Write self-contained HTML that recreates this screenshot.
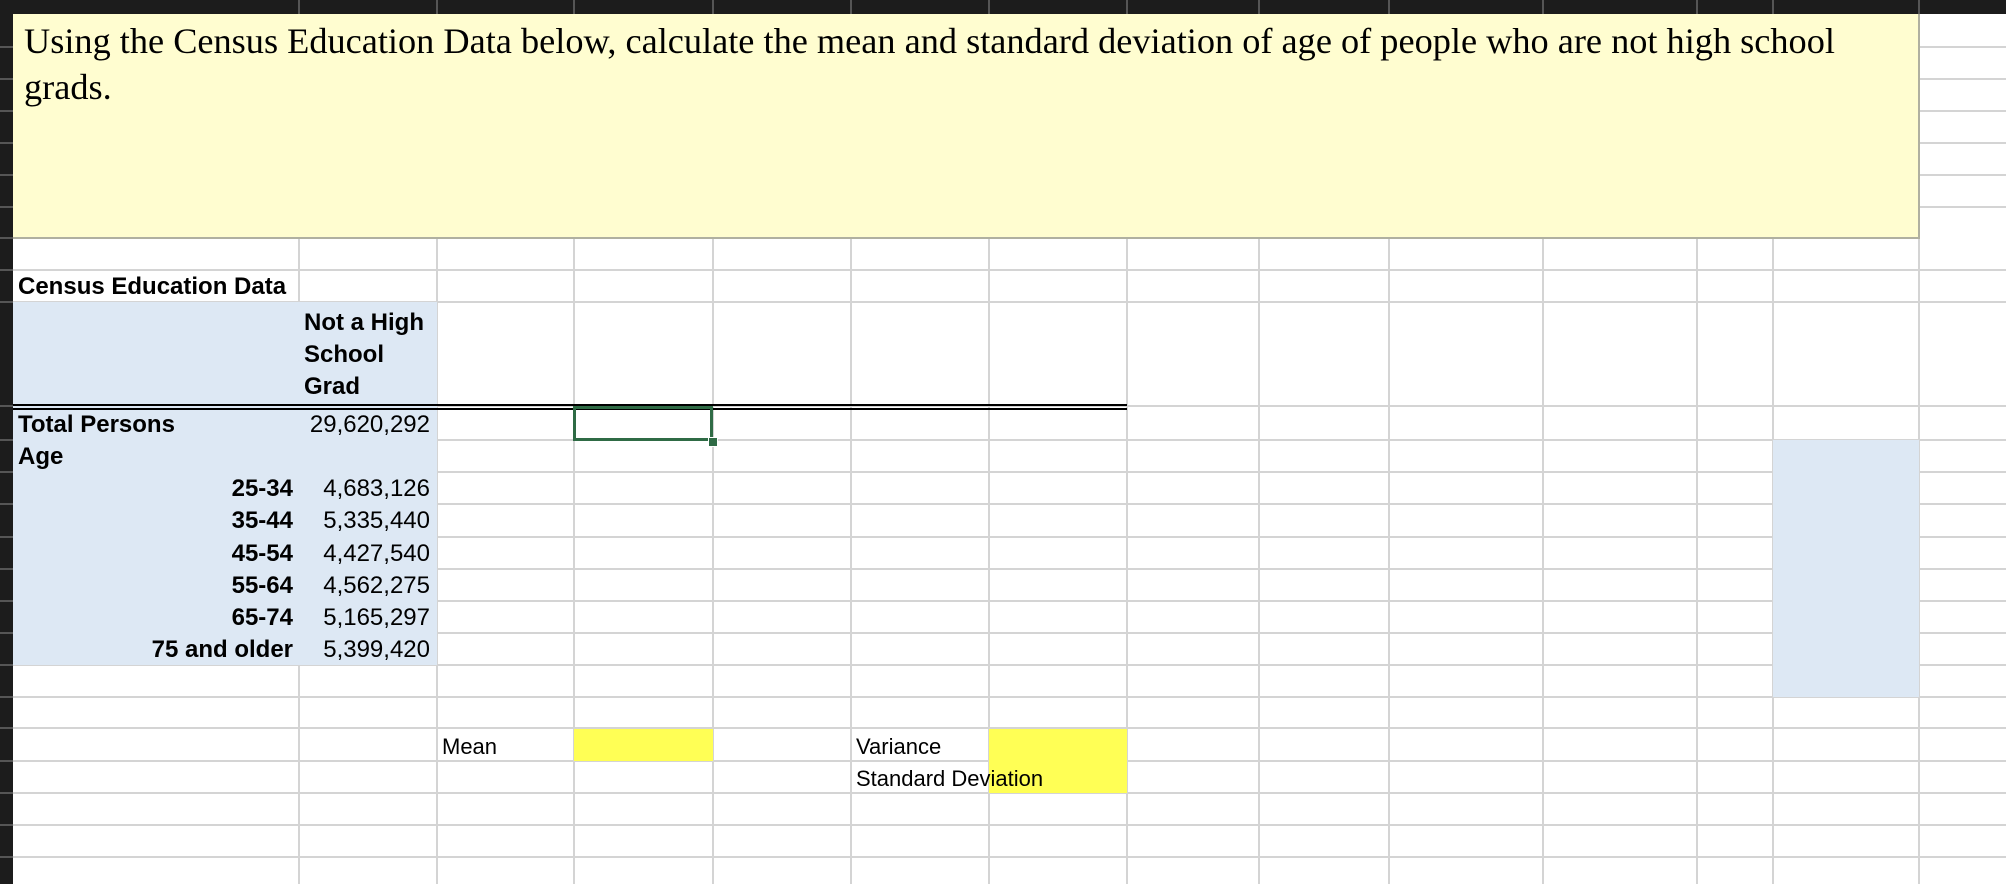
<!DOCTYPE html>
<html><head><meta charset="utf-8"><style>
html,body{margin:0;padding:0;}
body{width:2006px;height:884px;position:relative;overflow:hidden;background:#fff;font-family:"Liberation Sans",Arial,sans-serif;}
.a{position:absolute;}
.f{position:absolute;z-index:2;}
.h{position:absolute;height:2px;background:#d4d4d4;}
.v{position:absolute;width:2px;background:#d4d4d4;}
.t{position:absolute;font-size:24px;color:#000;white-space:nowrap;line-height:32px;z-index:5;}
.b{font-weight:bold;}
#g{position:absolute;left:0;top:0;z-index:1;}
</style></head><body>
<div id="g"></div>
<!-- fills -->
<div class="f" style="left:13px;top:302px;width:424px;height:363px;background:#dde8f4"></div>
<div class="f" style="left:1773px;top:440px;width:146px;height:257px;background:#dde8f4"></div>
<div class="f" style="left:574px;top:729px;width:139px;height:32px;background:#ffff55"></div>
<div class="f" style="left:989px;top:729px;width:138px;height:64px;background:#ffff55"></div>
<!-- yellow note -->
<div class="f" style="left:13px;top:14px;width:1905px;height:223px;background:#fffdd0;border-right:2px solid #b0b0a0;border-bottom:2px solid #b0b0a0"></div>
<div class="t" style="left:24px;top:18px;width:1850px;white-space:normal;font-family:'Liberation Serif','Times New Roman',serif;font-size:36.3px;line-height:46px;">Using the Census Education Data below, calculate the mean and standard deviation of age of people who are not high school grads.</div>
<!-- header dark -->
<div class="f" style="left:0;top:0;width:2006px;height:14px;background:#1c1c1c"></div>
<div class="f" style="left:0;top:0;width:13px;height:884px;background:#1c1c1c"></div>
<!-- double line -->
<div class="f" style="left:13px;top:404px;width:1114px;height:2px;background:#000;z-index:3"></div>
<div class="f" style="left:13px;top:408px;width:1114px;height:2px;background:#000;z-index:3"></div>
<!-- selection -->
<div class="f" style="left:573px;top:406px;width:140px;height:35px;border:3px solid #2f6b45;box-sizing:border-box;z-index:4"></div>
<div class="f" style="left:708px;top:437px;width:8px;height:8px;background:#2f6b45;border:1px solid #fff;z-index:4"></div>
<!-- text -->
<div class="t b" style="left:18px;top:271px">Census Education Data</div>
<div class="t b" style="left:304px;top:307px;line-height:32px">Not a High<br>School<br>Grad</div>
<div class="t b" style="left:18px;top:409px">Total Persons</div>
<div class="t" style="right:1576px;top:409px">29,620,292</div>
<div class="t b" style="left:18px;top:441px">Age</div>
<div class="t b" style="right:1713px;top:473px">25-34</div><div class="t" style="right:1576px;top:473px">4,683,126</div>
<div class="t b" style="right:1713px;top:505px">35-44</div><div class="t" style="right:1576px;top:505px">5,335,440</div>
<div class="t b" style="right:1713px;top:538px">45-54</div><div class="t" style="right:1576px;top:538px">4,427,540</div>
<div class="t b" style="right:1713px;top:570px">55-64</div><div class="t" style="right:1576px;top:570px">4,562,275</div>
<div class="t b" style="right:1713px;top:602px">65-74</div><div class="t" style="right:1576px;top:602px">5,165,297</div>
<div class="t b" style="right:1713px;top:634px">75 and older</div><div class="t" style="right:1576px;top:634px">5,399,420</div>
<div class="t" style="left:442px;top:731px;font-size:22px">Mean</div>
<div class="t" style="left:856px;top:731px;font-size:22px">Variance</div>
<div class="t" style="left:856px;top:763px;font-size:22px">Standard Deviation</div>
<script>
var g=document.getElementById('g'),h='';
var cols=[299,437,574,713,851,989,1127,1259,1389,1543,1697,1773,1919];
var rows=[270,302,406,440,472,504,537,569,601,633,665,697,728,761,793,825,857];
rows.forEach(function(y){h+='<div class="h" style="left:13px;top:'+(y-1)+'px;width:1993px"></div>';});
cols.forEach(function(x){h+='<div class="v" style="left:'+(x-1)+'px;top:238px;height:646px"></div>';});
[47,79,111,143,175,207].forEach(function(y){h+='<div class="h" style="left:1919px;top:'+(y-1)+'px;width:87px"></div>';});
g.innerHTML=h;
var s='';
cols.forEach(function(x){s+='<div class="f" style="z-index:3;left:'+(x-1)+'px;top:0;width:2px;height:14px;background:#555"></div>';});
[47,79,111,143,175,207,238,270,302,406,440,472,504,537,569,601,633,665,697,728,761,793,825,857].forEach(function(y){s+='<div class="f" style="z-index:3;left:0;top:'+(y-1)+'px;width:13px;height:2px;background:#555"></div>';});
document.body.insertAdjacentHTML('beforeend',s);
</script>
</body></html>
